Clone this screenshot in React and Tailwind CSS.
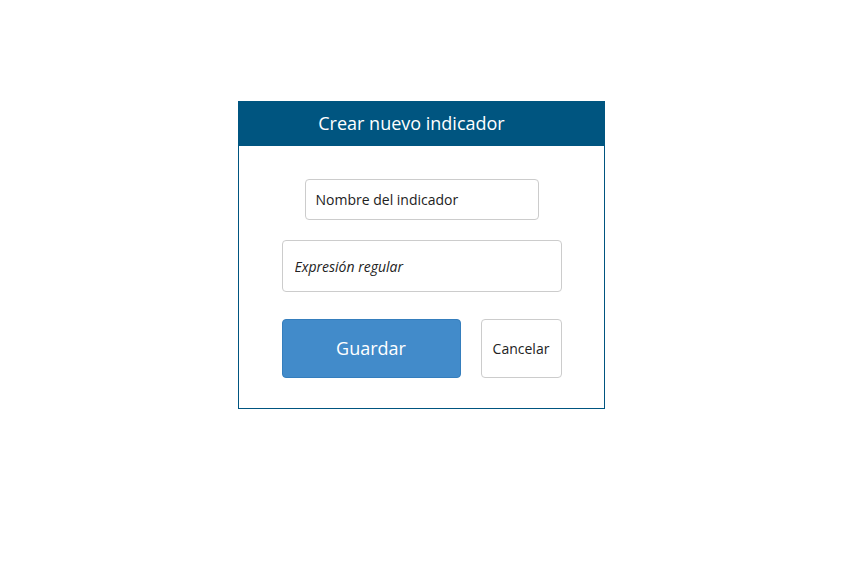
import React from "react";

const App = () => {
  return (
    <div className="min-h-[571px] w-full bg-white pt-[101px] pl-[238px] font-['Open_Sans',sans-serif]">
      <div className="flex w-[367px] flex-col border border-[#005580] bg-white">
        <div className="flex h-[44px] items-center justify-center bg-[#005580] pr-[20px] pb-[2px]">
          <h2 className="text-[18px] text-white">Crear nuevo indicador</h2>
        </div>

        <div className="flex flex-col items-center pt-[33px] pb-[30px]">
          <input
            type="text"
            placeholder="Nombre del indicador"
            className="h-[41px] w-[234px] rounded-[4px] border border-[#cccccc] px-[10px] text-[14px] text-[#333] outline-none placeholder:text-[#222]"
          />
          <input
            type="text"
            placeholder="Expresión regular"
            className="mt-[20px] h-[52px] w-[280px] rounded-[4px] border border-[#cccccc] px-[12px] text-[14px] italic text-[#333] outline-none placeholder:text-[#222]"
          />
          <div className="mt-[27px] flex w-[280px] gap-[20px]">
            <button
              type="button"
              className="h-[59px] w-[179px] rounded-[4px] border border-[#357ebd] bg-[#428bca] text-[18px] text-white"
            >
              Guardar
            </button>
            <button
              type="button"
              className="h-[59px] w-[81px] rounded-[4px] border border-[#cccccc] bg-white text-[14px] text-[#222]"
            >
              Cancelar
            </button>
          </div>
        </div>
      </div>
    </div>
  );
};

export default App;
